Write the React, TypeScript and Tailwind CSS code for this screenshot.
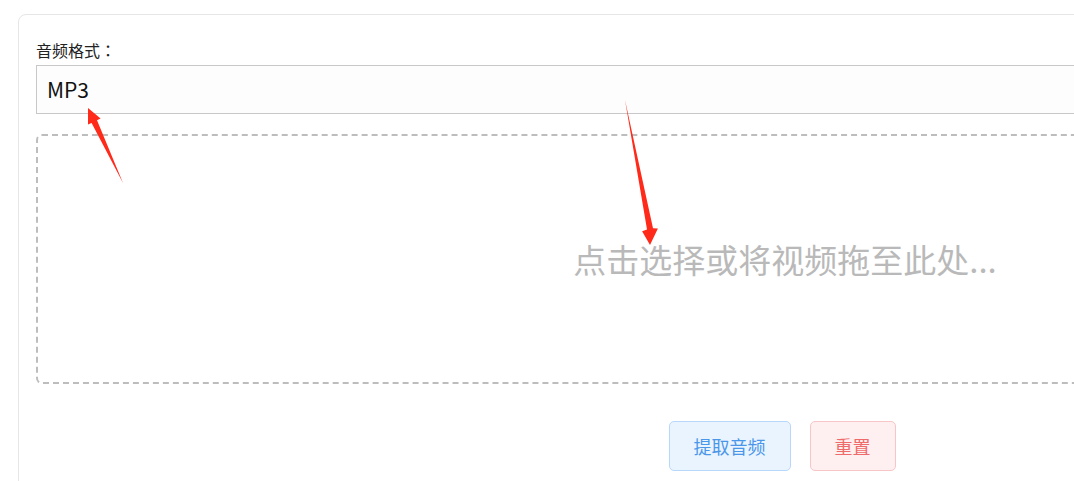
import React from "react";

export default function App() {
  const font = { fontFamily: '"Noto Sans CJK SC", "Noto Sans", sans-serif' };
  return (
    <div className="relative h-[481px] w-[1074px] overflow-hidden bg-white" style={font}>
      <div className="pl-[18px] pt-[14px]">
        <div className="w-[1528px] h-[600px] rounded-[8px] border border-[#e6e6e6] bg-white px-[17px] pt-[24px]">
          <div className="text-[16px] leading-[22px] text-[#222] mb-[4px]">
            音频格式
            <span className="font-['Noto_Sans_CJK_TC',sans-serif]">：</span>
          </div>
          <div className="h-[49px] border border-[#c8c8c8] bg-[#fdfdfd] flex items-center pl-[10px] text-[21px] text-[#111]">
            MP3
          </div>
          <div className="mt-[20px] h-[250px] rounded-[6px] border-2 border-dashed border-[#bdbdbd] flex items-center justify-center">
            <span className="text-[33px] leading-[40px] text-[#b9b9b9] pl-[6px]">点击选择或将视频拖至此处...</span>
          </div>
          <div className="mt-[37px] flex justify-center gap-[19px]">
            <button className="h-[50px] px-[24px] rounded-[5px] border border-[#b8d8fb] bg-[#eaf4ff] text-[18px] text-[#4a97ea]">
              提取音频
            </button>
            <button className="h-[50px] px-[24px] rounded-[5px] border border-[#f8c6c6] bg-[#feeff0] text-[18px] text-[#ef6a6a]">
              重置
            </button>
          </div>
        </div>
      </div>
      <svg className="absolute left-0 top-0 pointer-events-none" width="1074" height="481">
        <polygon
          points="88,108 100.6,118.6 97,120.3 123,183 91.6,122.9 88,124.6"
          fill="#ff2a1a"
        />
        <polygon
          points="650,245 657.9,228.6 653,228.3 625,100 647,229.6 642.1,231.3"
          fill="#ff2a1a"
        />
      </svg>
    </div>
  );
}
